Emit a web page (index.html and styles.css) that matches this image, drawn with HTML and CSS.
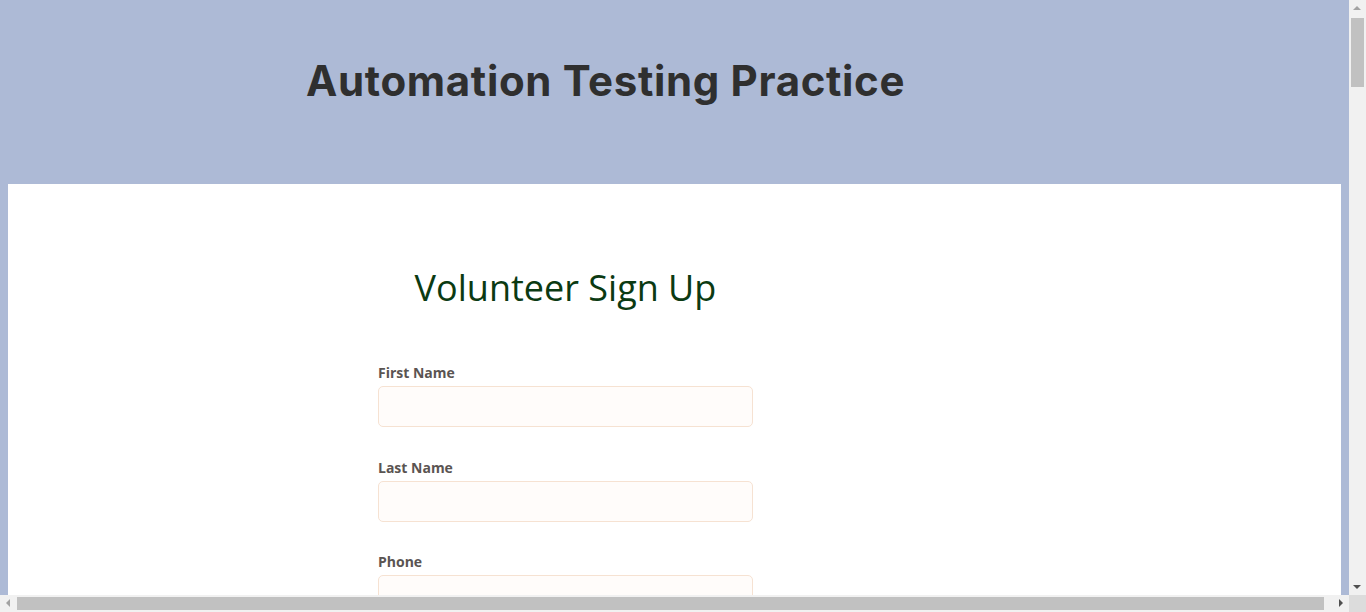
FILE: index.html
```html
<!DOCTYPE html>
<html lang="en">
<head>
<meta charset="utf-8">
<title>Automation Testing Practice</title>
<link rel="stylesheet" href="styles.css">
</head>
<body>
<div class="page">
  <header class="header">
    <h1 class="title">Automation Testing Practice</h1>
  </header>
  <main class="main">
    <section class="signup">
      <h2 class="signup-title">Volunteer Sign Up</h2>
      <form class="form">
        <div class="field">
          <label class="label" for="fn">First Name</label>
          <input class="input" id="fn" type="text">
        </div>
        <div class="field">
          <label class="label" for="ln">Last Name</label>
          <input class="input" id="ln" type="text">
        </div>
        <div class="field">
          <label class="label" for="ph">Phone</label>
          <input class="input" id="ph" type="text">
        </div>
      </form>
    </section>
  </main>
</div>
<div class="vscroll">
  <div class="arrow arrow-up"></div>
  <div class="vtrack"><div class="vthumb"></div></div>
  <div class="arrow arrow-down"></div>
</div>
<div class="hscroll">
  <div class="arrow arrow-left"></div>
  <div class="htrack"><div class="hthumb"></div></div>
  <div class="arrow arrow-right"></div>
</div>
<div class="corner"></div>
</body>
</html>
```
FILE: styles.css
```css
html, body {
  margin: 0;
  padding: 0;
  overflow: hidden;
  height: 100%;
}
body {
  background: #adbad6;
  font-family: "Open Sans", "Liberation Sans", sans-serif;
}
.page {
  width: 1349px;
}
.header {
  height: 183px;
  padding-left: 306px;
  box-sizing: border-box;
  padding-top: 55px;
}
.title {
  margin: 0;
  font-family: Inter, "Open Sans", sans-serif;
  font-weight: 700;
  font-size: 42px;
  line-height: 52px;
  color: #2f2f2f;
  letter-spacing: 0.65px;
}
.main {
  margin: 1px 8px 0;
  background: #fff;
  height: 800px;
  padding-top: 81px;
  box-sizing: border-box;
}
.signup {
  width: 375px;
  margin-left: 370px;
}
.signup-title {
  margin: 0 0 52px;
  text-align: center;
  font-weight: 400;
  font-size: 36px;
  line-height: 46px;
  color: #0b3a12;
}
.form {
  display: flex;
  flex-direction: column;
  gap: 30.6px;
}
.field {
  display: flex;
  flex-direction: column;
}
.label {
  font-size: 14px;
  font-weight: 700;
  color: #5a5452;
  line-height: 19px;
}
.input {
  box-sizing: border-box;
  width: 375px;
  height: 41px;
  border: 1px solid #f6e2d2;
  border-radius: 5px;
  background: #fffcfa;
  margin-top: 4px;
  outline: none;
}
.vscroll {
  position: fixed;
  top: 0;
  right: 0;
  width: 17px;
  height: 595px;
  background: #f1f1f1;
  display: flex;
  flex-direction: column;
}
.vtrack {
  flex: 1;
  position: relative;
}
.vthumb {
  position: absolute;
  left: 2px;
  right: 2px;
  top: 1px;
  height: 69px;
  background: #c1c1c1;
}
.hscroll {
  position: fixed;
  left: 0;
  bottom: 0;
  width: 1349px;
  height: 17px;
  background: #f1f1f1;
  display: flex;
}
.htrack {
  flex: 1;
  position: relative;
}
.hthumb {
  position: absolute;
  top: 2px;
  bottom: 2px;
  left: 0;
  width: 1307px;
  background: #c1c1c1;
}
.corner {
  position: fixed;
  right: 0;
  bottom: 0;
  width: 17px;
  height: 17px;
  background: #dcdcdc;
}
.arrow {
  width: 17px;
  height: 17px;
  flex: none;
  position: relative;
}
.arrow::after {
  content: "";
  position: absolute;
  width: 0;
  height: 0;
}
.arrow-up::after {
  left: 4px;
  top: 6px;
  border-left: 4px solid transparent;
  border-right: 4px solid transparent;
  border-bottom: 4px solid #a3a3a3;
}
.arrow-down::after {
  left: 4px;
  top: 7px;
  border-left: 4px solid transparent;
  border-right: 4px solid transparent;
  border-top: 4px solid #505050;
}
.arrow-left::after {
  left: 6px;
  top: 4px;
  border-top: 4px solid transparent;
  border-bottom: 4px solid transparent;
  border-right: 4px solid #a3a3a3;
}
.arrow-right::after {
  left: 7px;
  top: 4px;
  border-top: 4px solid transparent;
  border-bottom: 4px solid transparent;
  border-left: 4px solid #505050;
}
```
